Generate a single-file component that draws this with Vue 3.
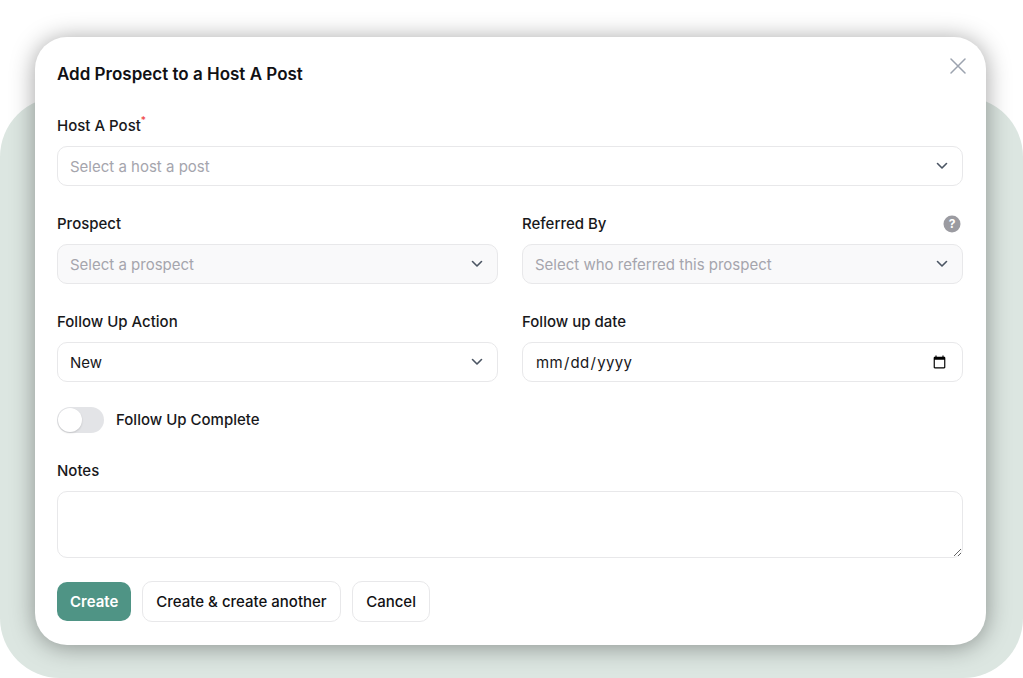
<template>
  <div class="stage">
    <div class="backdrop"></div>
    <div class="modal">
      <button class="close-btn" type="button" aria-label="Close">
        <svg width="16" height="16" viewBox="0 0 16 16" fill="none">
          <path d="M1 1L15 15M15 1L1 15" stroke="#9ca3af" stroke-width="1.5" stroke-linecap="round" />
        </svg>
      </button>

      <h3 class="title">Add Prospect to a Host A Post</h3>

      <div class="field first">
        <label class="label">Host A Post<sup class="req">*</sup></label>
        <div class="select-wrap">
          <select class="control placeholder">
            <option>Select a host a post</option>
          </select>
          <svg class="chevron" width="12" height="8" viewBox="0 0 12 8" fill="none">
            <path d="M1.5 1.5L6 6L10.5 1.5" stroke="#4b5563" stroke-width="1.6" stroke-linecap="round" stroke-linejoin="round" />
          </svg>
        </div>
      </div>

      <div class="row">
        <div class="field">
          <label class="label">Prospect</label>
          <div class="select-wrap">
            <select class="control placeholder muted">
              <option>Select a prospect</option>
            </select>
            <svg class="chevron" width="12" height="8" viewBox="0 0 12 8" fill="none">
              <path d="M1.5 1.5L6 6L10.5 1.5" stroke="#4b5563" stroke-width="1.6" stroke-linecap="round" stroke-linejoin="round" />
            </svg>
          </div>
        </div>
        <div class="field">
          <div class="label-row">
            <label class="label">Referred By</label>
            <svg class="help" width="18" height="18" viewBox="0 0 18 18">
              <circle cx="9" cy="9" r="8.5" fill="#9b9ba1" />
              <text x="9" y="13.2" text-anchor="middle" class="help-mark">?</text>
            </svg>
          </div>
          <div class="select-wrap">
            <select class="control placeholder muted">
              <option>Select who referred this prospect</option>
            </select>
            <svg class="chevron" width="12" height="8" viewBox="0 0 12 8" fill="none">
              <path d="M1.5 1.5L6 6L10.5 1.5" stroke="#4b5563" stroke-width="1.6" stroke-linecap="round" stroke-linejoin="round" />
            </svg>
          </div>
        </div>
      </div>

      <div class="row">
        <div class="field">
          <label class="label">Follow Up Action</label>
          <div class="select-wrap">
            <select class="control">
              <option>New</option>
            </select>
            <svg class="chevron" width="12" height="8" viewBox="0 0 12 8" fill="none">
              <path d="M1.5 1.5L6 6L10.5 1.5" stroke="#4b5563" stroke-width="1.6" stroke-linecap="round" stroke-linejoin="round" />
            </svg>
          </div>
        </div>
        <div class="field">
          <label class="label">Follow up date</label>
          <input class="control date" type="date" />
        </div>
      </div>

      <div class="toggle-row">
        <span class="toggle"><span class="knob"></span></span>
        <span class="toggle-label">Follow Up Complete</span>
      </div>

      <div class="field">
        <label class="label">Notes</label>
        <textarea class="control notes"></textarea>
      </div>

      <div class="actions">
        <button class="btn btn-primary" type="button">Create</button>
        <button class="btn" type="button">Create &amp; create another</button>
        <button class="btn" type="button">Cancel</button>
      </div>
    </div>
  </div>
</template>

<script setup>
</script>

<style scoped>
.stage {
  position: relative;
  width: 1023px;
  height: 678px;
  overflow: hidden;
  background: #fff;
  font-family: Inter, "Liberation Sans", sans-serif;
  color: #18181b;
}

.backdrop {
  position: absolute;
  left: 0;
  right: 0;
  top: 97px;
  bottom: 0;
  border-radius: 60px;
  background: #dce6e1;
}

.modal {
  position: relative;
  box-sizing: border-box;
  width: 951px;
  height: 608px;
  margin: 37px 0 0 35px;
  padding: 27px 23px 0 22px;
  background: #fff;
  border-radius: 32px;
  box-shadow: 0 2px 24px rgba(0, 0, 0, 0.38);
}

.close-btn {
  position: absolute;
  top: 21px;
  right: 20px;
  padding: 0;
  border: none;
  background: none;
  line-height: 0;
}

.title {
  margin: 0 0 32px;
  font-size: 17px;
  line-height: 20px;
  font-weight: 600;
  color: #111114;
}

.row {
  display: grid;
  grid-template-columns: 441px 441px;
  gap: 24px;
  margin-top: 28px;
}

.label {
  display: block;
  font-size: 15px;
  line-height: 20px;
  font-weight: 500;
  color: #18181b;
}

.req {
  position: relative;
  top: -1px;
  color: #ef4444;
  font-size: 10px;
  line-height: 0;
}

.label-row {
  display: flex;
  justify-content: space-between;
  align-items: center;
  padding-right: 2px;
}

.help-mark {
  fill: #fff;
  font-size: 12px;
  font-weight: 700;
}

.select-wrap {
  position: relative;
  margin-top: 10px;
}

.control {
  display: block;
  box-sizing: border-box;
  width: 100%;
  height: 40px;
  padding: 0 12px;
  border: 1.5px solid #e8e8ea;
  border-radius: 10px;
  background: #fff;
  outline: none;
  font-family: inherit;
  font-size: 15px;
  color: #18181b;
  appearance: none;
}

.placeholder {
  color: #a5a5ad;
}

.muted {
  background: #f9f9fa;
}

.chevron {
  position: absolute;
  top: 16px;
  right: 15px;
  pointer-events: none;
}

.date {
  margin-top: 10px;
  padding-right: 13px;
  letter-spacing: 0.3px;
}

.toggle-row {
  display: flex;
  align-items: center;
  gap: 12px;
  margin: 25px 0 0;
  line-height: 24px;
}

.toggle {
  display: block;
  box-sizing: border-box;
  width: 47px;
  height: 26px;
  padding: 1px;
  border-radius: 13px;
  background: #e3e4e7;
}

.knob {
  display: block;
  width: 24px;
  height: 24px;
  border-radius: 50%;
  background: #fff;
  box-shadow: 0 1px 2px rgba(0, 0, 0, 0.15);
}

.toggle-label {
  font-size: 15px;
  font-weight: 500;
  color: #18181b;
}

.toggle-row + .field {
  margin-top: 28px;
}

.notes {
  height: 67px;
  margin-top: 10px;
  resize: vertical;
}

.actions {
  display: flex;
  align-items: center;
  gap: 10.5px;
  margin-top: 23px;
}

.btn {
  box-sizing: border-box;
  height: 41px;
  padding: 0 13.5px;
  border: 1.5px solid #e8e8ea;
  border-radius: 10px;
  background: #fff;
  font-family: inherit;
  font-size: 15px;
  font-weight: 500;
  color: #111114;
}

.btn-primary {
  height: 39px;
  padding: 0 13px;
  border: none;
  background: #4f9485;
  color: #fff;
  font-weight: 600;
}
</style>
